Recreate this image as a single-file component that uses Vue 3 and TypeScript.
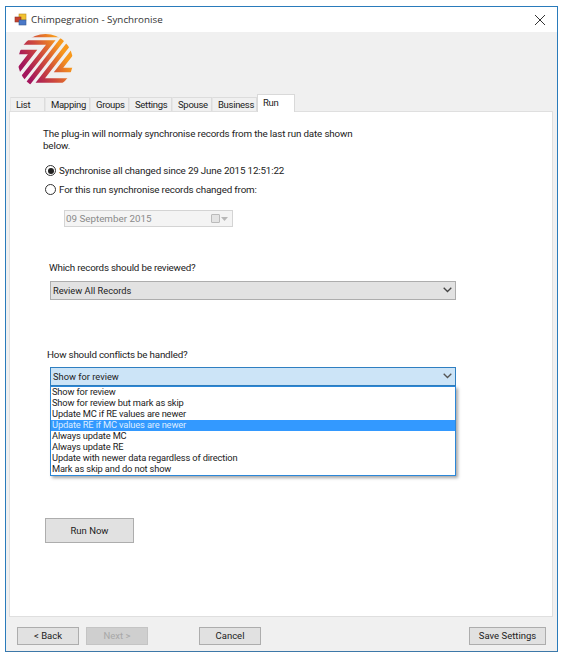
<script setup lang="ts">
const tabs: string[] = ['List', 'Mapping', 'Groups', 'Settings', 'Spouse', 'Business']
const tabWidths: number[] = [35, 45, 39, 43, 40, 45]
const options: string[] = [
  'Show for review',
  'Show for review but mark as skip',
  'Update MC if RE values are newer',
  'Update RE if MC values are newer',
  'Always update MC',
  'Always update RE',
  'Update with newer data regardless of direction',
  'Mark as skip and do not show',
]
</script>

<template>
  <div class="window">
    <div class="titlebar">
      <svg class="appicon" width="13" height="13" viewBox="0 0 13 13">
        <rect x="5" y="1" width="7" height="6" fill="#f2c230" stroke="#b98a20" stroke-width=".6" />
        <rect x="1" y="4" width="6" height="5" fill="#c8402c" stroke="#8a3a30" stroke-width=".6" />
        <rect x="5" y="7" width="7" height="5" fill="#4a78c8" stroke="#3a5a90" stroke-width=".6" />
      </svg>
      <span class="title">Chimpegration - Synchronise</span>
      <svg class="close" width="12" height="12" viewBox="0 0 12 12">
        <path d="M1 1 L11 11 M11 1 L1 11" stroke="#333" stroke-width="1" fill="none" />
      </svg>
    </div>
    <div class="body">
      <div class="logo-row">
        <svg class="logo" width="56" height="56" viewBox="18 34 56 56">
          <defs>
            <linearGradient id="lg" gradientUnits="userSpaceOnUse" x1="26" y1="70" x2="62" y2="50">
              <stop offset="0" stop-color="#a3155c" />
              <stop offset="0.5" stop-color="#cf4a3c" />
              <stop offset="1" stop-color="#f7981c" />
            </linearGradient>
            <clipPath id="lc"><circle cx="45.5" cy="61.5" r="27.5" /></clipPath>
          </defs>
          <g clip-path="url(#lc)" fill="none" stroke="url(#lg)" stroke-width="4.6">
            <path d="M28 35 H60" />
            <path d="M16 52 H32.600 L10.700 80" />
            <path d="M22 42.500 H50.800 L13 90" />
            <path d="M69.700 30 L23 90" />
            <path d="M79.700 30 L40.300 80.500 H75" />
            <path d="M82 40 L58.500 70 H80" />
          </g>
        </svg>
      </div>
      <div class="tabstrip">
        <div v-for="(t, i) in tabs" :key="t" class="tab" :style="{ width: tabWidths[i] + 'px' }">{{ t }}</div>
        <div class="tab active">Run</div>
      </div>
      <div class="page">
        <p class="intro">The plug-in will normaly synchronise records from the last run date shown below.</p>
        <div class="radio-row first"><span class="radio on"></span>Synchronise all changed since 29 June 2015 12:51:22</div>
        <div class="radio-row second"><span class="radio"></span>For this run synchronise records changed from:</div>
        <div class="datefield">
          <span>09 September 2015</span>
          <span class="dateicons">
            <span class="cal"></span>
            <svg width="7" height="4" viewBox="0 0 7 4"><path d="M0 0 H7 L3.500 4 Z" fill="#b8b8b8" /></svg>
          </span>
        </div>
        <div class="label records">Which records should be reviewed?</div>
        <div class="combo">
          <span>Review All Records</span>
          <svg width="9" height="6" viewBox="0 0 9 6"><path d="M.7 .7 L4.500 4.500 L8.300 .7" stroke="#444" stroke-width="1.300" fill="none" /></svg>
        </div>
        <div class="label conflicts">How should conflicts be handled?</div>
        <div class="combo open">
          <span>Show for review</span>
          <svg width="9" height="6" viewBox="0 0 9 6"><path d="M.7 .7 L4.500 4.500 L8.300 .7" stroke="#555" stroke-width="1.300" fill="none" /></svg>
          <ul class="list">
            <li v-for="(o, i) in options" :key="o" :class="{ sel: i === 3 }">{{ o }}</li>
          </ul>
        </div>
        <button class="btn run">Run Now</button>
      </div>
      <div class="footer">
        <button class="btn fb">&lt; Back</button>
        <button class="btn fb disabled">Next &gt;</button>
        <button class="btn fb cancel">Cancel</button>
        <button class="btn save">Save Settings</button>
      </div>
    </div>
  </div>
</template>

<style>
html, body { background: #fff; }
</style>

<style scoped>
.window {
  margin: 6px 0 0 5px;
  width: 553px;
  height: 646px;
  box-sizing: border-box;
  border: 1px solid #2a7bbb;
  border-bottom-color: #3d78a8;
  display: flex;
  flex-direction: column;
  font-family: Roboto, "Liberation Sans", sans-serif;
  font-size: 9.800px;
  color: #222;
}
.titlebar {
  height: 25px;
  flex: none;
  background: #fff;
  display: flex;
  align-items: center;
  padding: 0 11px 0 8px;
}
.appicon { flex: none; margin-right: 4px; }
.title {
  font-family: "Open Sans", sans-serif;
  font-size: 9.800px;
  color: #333;
  flex: 1;
}
.body {
  flex: 1;
  background: #f0f0f0;
  display: flex;
  flex-direction: column;
  min-height: 0;
}
.logo-row { height: 61px; flex: none; padding-left: 12px; box-sizing: border-box; }
.logo { display: block; margin-top: 2px; }
.tabstrip {
  height: 18px;
  flex: none;
  display: flex;
  align-items: flex-end;
  padding-left: 4px;
  position: relative;
  z-index: 1;
}
.tab {
  height: 14px;
  box-sizing: border-box;
  background: #f0f0f0;
  border: 1px solid #dcdcdc;
  border-bottom: none;
  border-left-color: #e6e6e6;
  padding-left: 5px;
  line-height: 14px;
  font-size: 9.500px;
  letter-spacing: -0.3px;
}
.tab.active {
  width: 38px;
  height: 18px;
  background: #fff;
  line-height: 15px;
  border-color: #d9d9d9;
  margin-bottom: -1px;
}
.page {
  width: 544px;
  height: 506px;
  box-sizing: border-box;
  margin-left: 3px;
  flex: none;
  background: #fff;
  border: 1px solid #dfdfdf;
  padding: 16px 0 0 33px;
}
.intro {
  margin: 0;
  width: 330px;
  line-height: 12px;
  letter-spacing: -0.15px;
}
.radio-row {
  display: flex;
  align-items: center;
  height: 14px;
  box-sizing: border-box;
  padding-bottom: 1px;
  letter-spacing: -0.16px;
}
.radio-row.first { margin-top: 12px; }
.radio-row.second { margin-top: 5px; }
.radio {
  width: 11px;
  height: 11px;
  box-sizing: border-box;
  border: 1px solid #333;
  border-radius: 50%;
  background: #fff;
  margin: 0 3px 0 2px;
  flex: none;
  position: relative;
}
.radio.on::after {
  content: "";
  position: absolute;
  inset: 1.500px;
  border-radius: 50%;
  background: #222;
}
.datefield {
  margin: 13px 0 0 21px;
  width: 169px;
  height: 17px;
  box-sizing: border-box;
  border: 1px solid #d4d4d4;
  background: #f4f4f4;
  color: #8a8a8a;
  display: flex;
  align-items: center;
  justify-content: space-between;
  padding: 0 4px 0 1px;
}
.dateicons { display: flex; align-items: center; gap: 1px; }
.cal {
  width: 9px;
  height: 9px;
  box-sizing: border-box;
  border: 1px solid #bbb;
  border-radius: 1px;
  background: #e4e4e4;
}
.label { line-height: 10px; letter-spacing: -0.2px; }
.label.records { margin: 36px 0 0 6px; }
.label.conflicts { margin: 50px 0 0 4px; }
.combo {
  position: relative;
  margin: 8px 0 0 7px;
  width: 406px;
  height: 19px;
  box-sizing: border-box;
  background: #e2e2e2;
  border: 1px solid #adadad;
  display: flex;
  align-items: center;
  justify-content: space-between;
  padding: 0 3px 1px 2px;
  font-size: 9.300px;
}
.combo.open {
  background: #cce4f7;
  border-color: #2f7fc1;
  border-bottom-width: 2px;
  margin-top: 7px;
  height: 20px;
}
.list {
  position: absolute;
  left: -1px;
  right: -1px;
  top: 18px;
  margin: 0;
  padding: 0;
  list-style: none;
  background: #fff;
  border: 1px solid #2b87d8;
  box-shadow: 2px 2px 3px rgba(0, 0, 0, .35);
}
.list li {
  height: 11px;
  line-height: 10px;
  padding-left: 1px;
  white-space: nowrap;
  letter-spacing: -0.15px;
}
.list li.sel { background: #3399ff; color: #dcecff; }
.btn {
  font: inherit;
  font-size: 9.500px;
  color: #222;
  background: #e1e1e1;
  border: 1px solid #adadad;
  padding: 0 0 1px;
  display: block;
}
.run {
  width: 89px;
  height: 25px;
  margin: 131px 0 0 2px;
}
.footer {
  display: flex;
  padding: 10px 0 0 11px;
}
.fb { width: 62px; height: 18px; margin-right: 7px; }
.fb.disabled { color: #a8a8a8; background: #cfcfcf; border-color: #c4c4c4; margin-right: 51px; }
.save { width: 77px; height: 18px; margin-left: 201px; }
</style>
